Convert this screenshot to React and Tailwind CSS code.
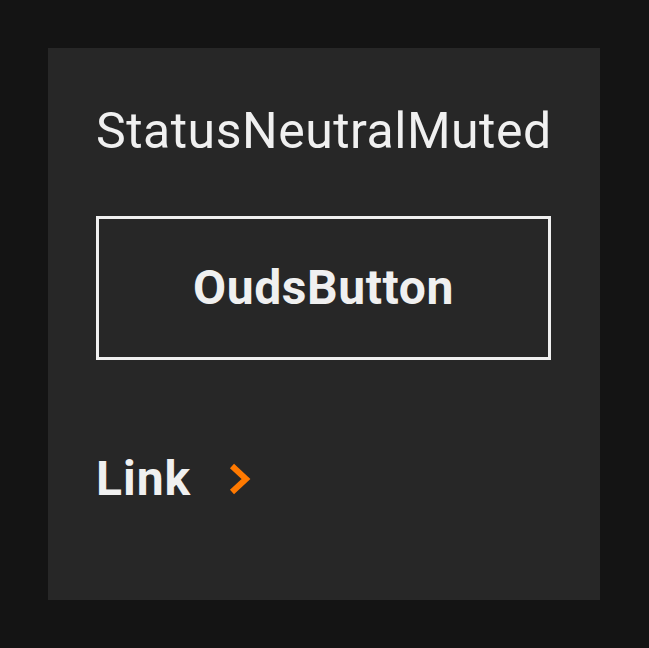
export default function App() {
  return (
    <div className="min-h-screen w-full bg-[#141414] p-12" style={{ fontFamily: 'Roboto, sans-serif' }}>
      <div className="w-[552px] h-[552px] bg-[#272727] px-12 pt-[54px] flex flex-col text-[#f0f0f0]">
        <div className="text-[50px] leading-[58.6px] font-normal tracking-[0.5px]">StatusNeutralMuted</div>
        <button className="mt-[55px] h-[144px] w-[455px] border-[3px] border-[#f0f0f0] flex items-center justify-center text-[48px] font-bold leading-none tracking-[0.6px]">
          OudsButton
        </button>
        <div className="mt-[91px] flex items-center">
          <span className="text-[48px] leading-[56px] font-bold tracking-[1px]">Link</span>
          <svg className="ml-[38px]" width="22" height="32" viewBox="0 0 22 32" fill="none">
            <path d="M3 3 L17 16 L3 29" stroke="#ff7900" strokeWidth="6" strokeLinejoin="miter" />
          </svg>
        </div>
      </div>
    </div>
  );
}
